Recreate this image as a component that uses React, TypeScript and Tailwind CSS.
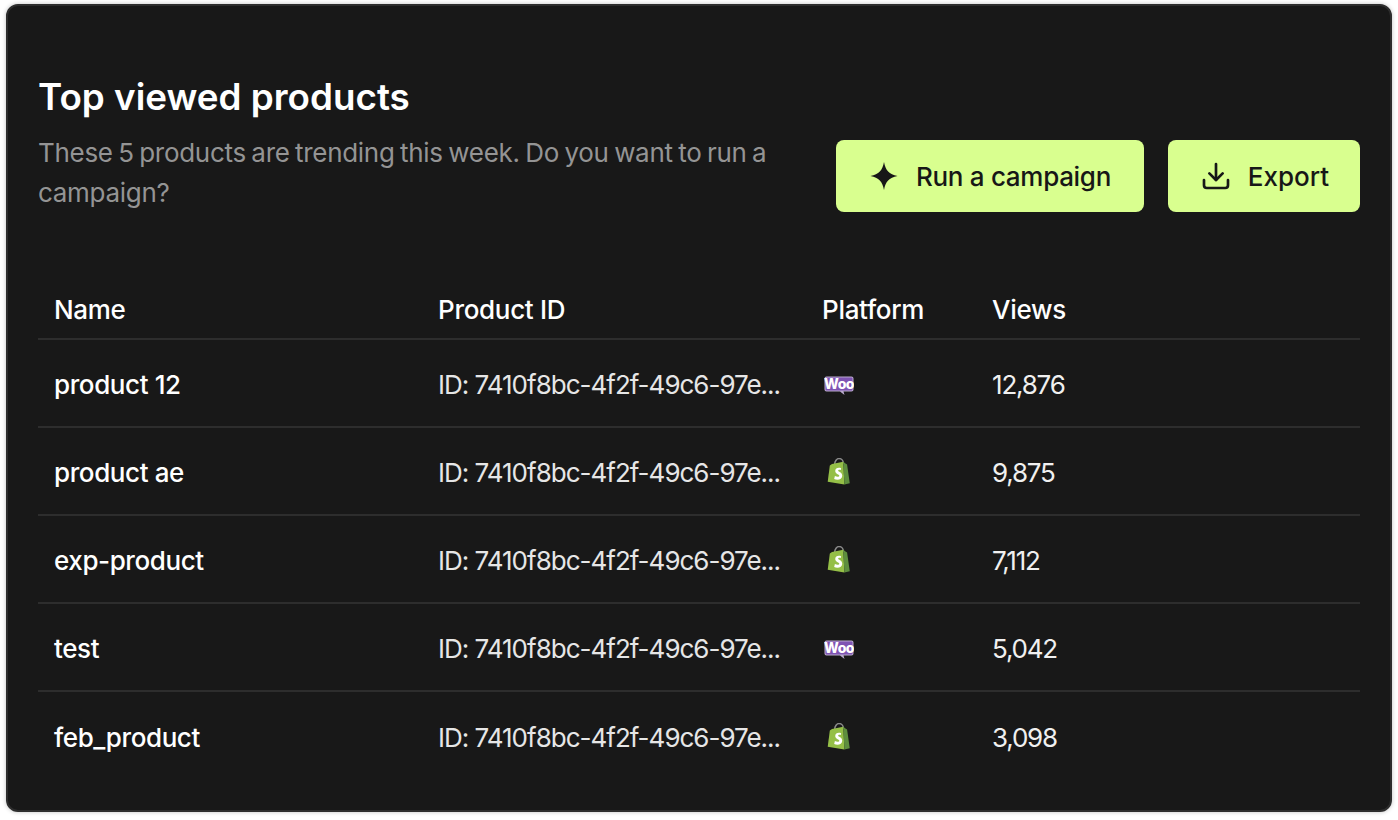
import { Download } from "lucide-react";

const products = [
  { name: "product 12", platform: "woo", views: "12,876" },
  { name: "product ae", platform: "shopify", views: "9,875" },
  { name: "exp-product", platform: "shopify", views: "7,112" },
  { name: "test", platform: "woo", views: "5,042" },
  { name: "feb_product", platform: "shopify", views: "3,098" },
];

const WooLogo = () => (
  <svg width="30" height="19" viewBox="0 0 30 19" fill="none" className="ml-0.5 mt-0.5">
    <path d="M2.500 0.500h25a2 2 0 0 1 2 2v11a2 2 0 0 1-2 2h-8l1 3.500-4.500-3.500H2.500a2 2 0 0 1-2-2V2.500a2 2 0 0 1 2-2z" fill="#b9a9cc" />
    <rect x="1.500" y="1.500" width="27" height="13" rx="1" fill="#7f54b3" />
    <text x="15" y="13" textAnchor="middle" fontFamily="Inter, sans-serif" fontWeight="800" fontSize="14" fill="#fff" letterSpacing="-0.5">Woo</text>
  </svg>
);

const ShopifyLogo = () => (
  <svg width="24" height="28" viewBox="1 1 22 26" fill="none" className="ml-[5px]">
    <path d="M8 7c0-3 2-5.500 4-5.500S16 3 16 6" stroke="#8a8a8a" strokeWidth="1.400" />
    <path d="M5.500 6.500 16 4.500l1 21-15.500-2.500L3.500 8z" fill="#95bf47" />
    <path d="M16 4.500l2 1.500 1.500 1 2.500 17.500-5 1z" fill="#5e8e3e" />
    <path d="M14 10.500c-2.500-1-5.500-.2-5.500 2.500 0 2.900 3.800 2.900 3.800 4.500 0 1.300-2.200 1.300-4.100.3l-.7 2.600c3 1.500 7.500.6 7.500-3 0-3.200-3.800-3.300-3.800-4.700 0-.8 1.200-1.100 2.500-.5z" fill="#fff" />
  </svg>
);

const Sparkle = () => (
  <svg width="30" height="30" viewBox="0 0 30 30">
    <path d="M15 1C16.600 9.500 20 13 28.500 15 20 17 16.600 20.500 15 29 13.400 20.500 10 17 1.500 15 10 13 13.400 9.500 15 1Z" fill="#171717" />
  </svg>
);

export default function App() {
  return (
    <div className="min-h-screen bg-white pt-1 pb-2 pl-1.5 pr-1.5 font-['Inter',sans-serif]">
      <div className="h-[808px] rounded-xl border-2 border-[#2d2d2d] bg-[#181818] px-[30px] pt-[68px] shadow-[0_0_4px_rgba(0,0,0,0.25)]">
        <div className="flex items-start justify-between">
          <div className="w-[760px]">
            <h1 className="text-[36.800px] font-semibold leading-[46px] text-white">Top viewed products</h1>
            <p className="mt-[13px] text-[26px] leading-[40px] tracking-[-0.3px] text-[#949494] [word-spacing:-1.5px]">
              These 5 products are trending this week. Do you want to run a campaign?
            </p>
          </div>
          <div className="mt-[66px] flex gap-6">
            <button className="flex h-[72px] w-[308px] items-center justify-center gap-[17px] rounded-lg bg-[#d9ff8f] text-[26px] font-medium tracking-[-0.3px] text-[#171717]">
              <Sparkle />
              Run a campaign
            </button>
            <button className="flex h-[72px] w-[192px] items-center justify-center gap-[16px] rounded-lg bg-[#d9ff8f] text-[26px] font-medium text-[#171717]">
              <Download size={32} strokeWidth={2} className="ml-px" />
              Export
            </button>
          </div>
        </div>

        <div className="mt-[57px] text-[26px] text-white">
          <div className="grid h-[70px] grid-cols-[384px_384px_170px_1fr] items-center border-b-2 border-[#2d2d2d] px-4 pt-[10px] font-medium tracking-[-0.3px]">
            <div>Name</div>
            <div>Product ID</div>
            <div>Platform</div>
            <div>Views</div>
          </div>
          {products.map((p, i) => (
            <div
              key={p.name}
              className={`grid h-[88px] grid-cols-[384px_384px_170px_1fr] items-center px-4 pt-0.5 ${i < products.length - 1 ? "border-b-2 border-[#2d2d2d]" : ""}`}
            >
              <div className="font-medium tracking-[-0.4px]">{p.name}</div>
              <div className="whitespace-nowrap tracking-[-1px] text-[#e6e6e6]">ID: 7410f8bc-4f2f-49c6-97e...</div>
              <div className="flex items-center">
                {p.platform === "woo" ? <WooLogo /> : <ShopifyLogo />}
              </div>
              <div className="tracking-[-1.200px] text-[#f0f0f0]">{p.views}</div>
            </div>
          ))}
        </div>
      </div>
    </div>
  );
}
